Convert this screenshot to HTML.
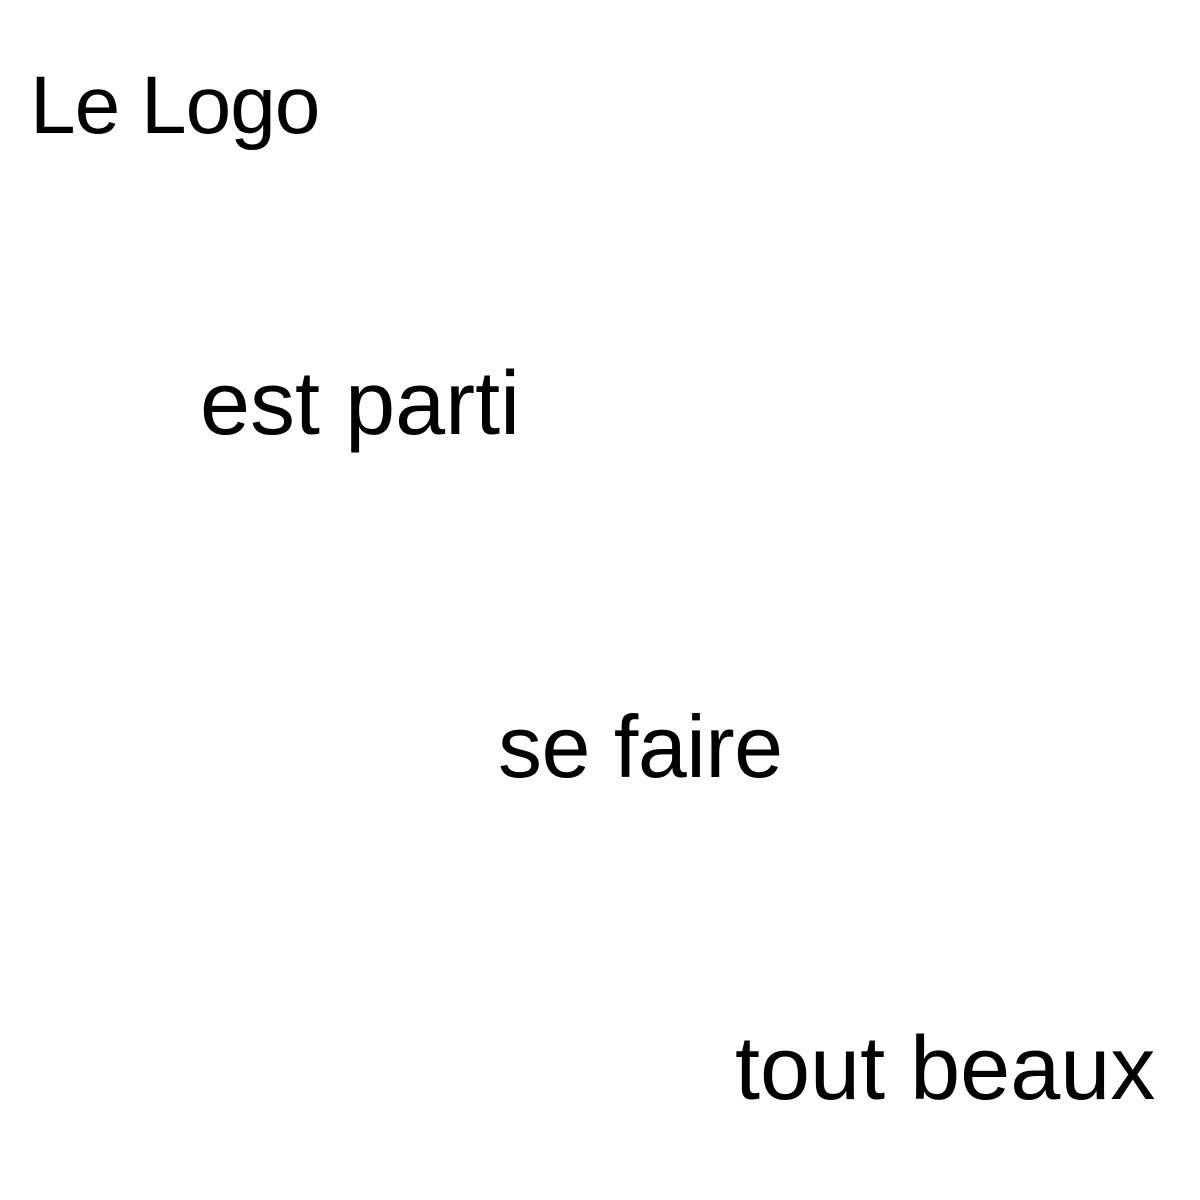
<!DOCTYPE html>
<html><head><meta charset="utf-8"><style>
html,body{margin:0;padding:0;background:#fff;width:1200px;height:1200px;overflow:hidden}
div{position:absolute;font-family:"Liberation Sans",sans-serif;line-height:1;color:#000;white-space:nowrap}
</style></head><body>
<div style="left:30px;top:65px;font-size:82px;letter-spacing:-1px">Le Logo</div>
<div style="left:200px;top:359px;font-size:90px">est parti</div>
<div style="left:498px;top:703px;font-size:88px;letter-spacing:-0.5px">se faire</div>
<div style="left:735px;top:1024px;font-size:90px">tout beaux</div>
</body></html>
